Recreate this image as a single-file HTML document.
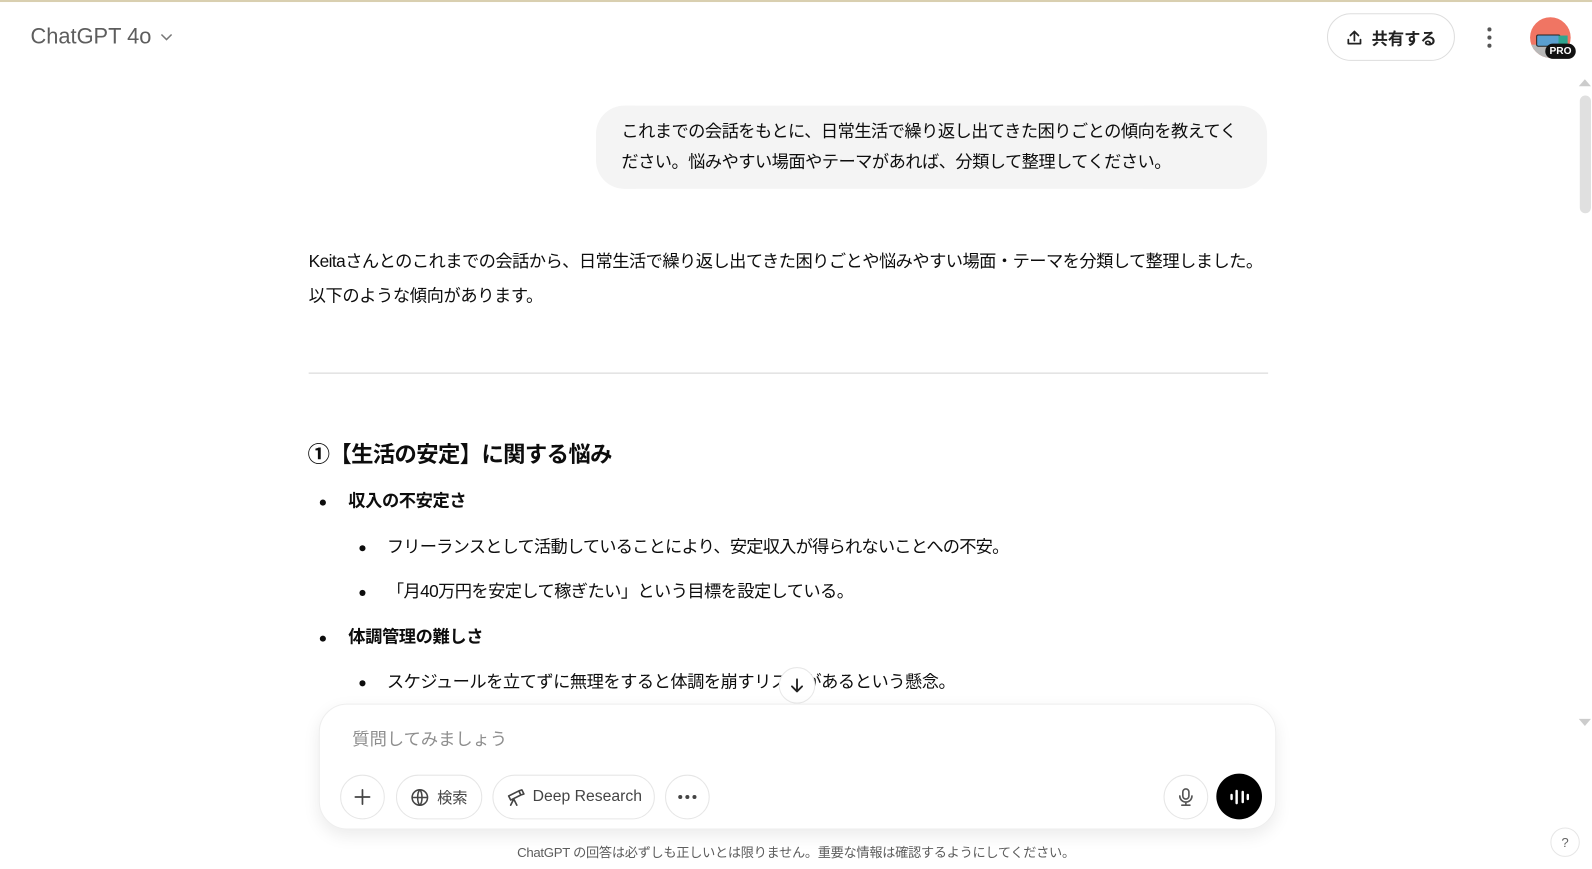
<!DOCTYPE html>
<html><head><meta charset="utf-8"><style>
*{margin:0;padding:0;box-sizing:border-box}
html,body{width:1592px;height:869px;overflow:hidden;background:#fff}
body{font-family:"Liberation Sans","Noto Sans CJK JP",sans-serif;color:#0d0d0d;position:relative}
#w{position:absolute;left:0;top:0;width:1568px;height:856px;transform:scale(1.0153);transform-origin:0 0}
.a{position:absolute;white-space:nowrap}
.topline{position:absolute;left:0;top:0;width:1592px;height:2px;background:#d9cfb0}
.t{font-size:17px;line-height:20px;letter-spacing:-0.4px}
.btn{position:absolute;border:1px solid #e6e6e6;border-radius:22px;background:#fff;display:flex;align-items:center;justify-content:center;font-size:15px;color:#444}
.dot{position:absolute;width:6px;height:6px;border-radius:50%;background:#0d0d0d}
</style></head><body>
<div id="w">
<div class="topline"></div>
<div class="a" style="left:30px;top:24px;font-size:21.5px;color:#5d5d5d">ChatGPT 4o</div>
<svg class="a" style="left:157px;top:31px" width="14" height="12" viewBox="0 0 14 12"><path d="M2 3l5 5 5-5" fill="none" stroke="#777" stroke-width="1.5"/></svg>

<div class="a" style="left:1307px;top:13px;width:126px;height:47px;border:1px solid #ddd;border-radius:24px;display:flex;align-items:center;justify-content:center;font-size:16px;font-weight:bold;color:#222">
<svg width="18" height="18" viewBox="0 0 18 18" style="margin-right:8px"><path d="M9 12V3M5 7l4-4 4 4M3 11v4h12v-4" fill="none" stroke="#222" stroke-width="1.7" stroke-linecap="round" stroke-linejoin="round"/></svg>共有する</div>
<div class="a" style="left:1465px;top:27px;width:4px;height:4px;border-radius:50%;background:#555"></div>
<div class="a" style="left:1465px;top:35px;width:4px;height:4px;border-radius:50%;background:#555"></div>
<div class="a" style="left:1465px;top:43px;width:4px;height:4px;border-radius:50%;background:#555"></div>
<div class="a" style="left:1507px;top:17px;width:40px;height:40px;border-radius:50%;background:#f07563;overflow:hidden">
<div style="position:absolute;left:0;top:27px;width:40px;height:13px;background:#b8b8b8"></div>
<div style="position:absolute;left:6px;top:17px;width:24px;height:12px;background:#5a9fd0;border:1px solid #222;border-radius:2px"></div>
<div style="position:absolute;left:28px;top:18px;width:9px;height:10px;background:#2fa58f"></div>
</div>
<div class="a" style="left:1522px;top:43px;width:30px;height:15px;border-radius:8px;background:#111;color:#fff;font-size:10px;font-weight:bold;text-align:center;line-height:15px">PRO</div>

<div class="a" style="left:1555px;top:78px;width:0;height:0;border-left:6px solid transparent;border-right:6px solid transparent;border-bottom:7px solid #ccc"></div>
<div class="a" style="left:1556px;top:94px;width:11px;height:116px;border-radius:6px;background:#e0e0e0"></div>
<div class="a" style="left:1555px;top:708px;width:0;height:0;border-left:6px solid transparent;border-right:6px solid transparent;border-top:7px solid #ccc"></div>

<div class="a" style="left:587px;top:104px;width:661px;height:82px;background:#f4f4f4;border-radius:28px"></div>
<div class="a t" style="left:612px;top:120px;letter-spacing:-0.55px">これまでの会話をもとに、日常生活で繰り返し出てきた困りごとの傾向を教えてく</div>
<div class="a t" style="left:612px;top:150px;letter-spacing:-0.55px">ださい。悩みやすい場面やテーマがあれば、分類して整理してください。</div>

<div class="a t" style="left:304px;top:248px;letter-spacing:-0.55px">Keitaさんとのこれまでの会話から、日常生活で繰り返し出てきた困りごとや悩みやすい場面・テーマを分類して整理しました。</div>
<div class="a t" style="left:304px;top:282px">以下のような傾向があります。</div>
<div class="a" style="left:304px;top:367px;width:945px;height:1px;background:#d4d4d4"></div>

<div class="a" style="left:303px;top:434px;font-size:22px;font-weight:bold;line-height:28px;letter-spacing:-0.6px">①【生活の安定】に関する悩み</div>
<div class="dot" style="left:315px;top:492px"></div>
<div class="a t" style="left:343px;top:484px;font-weight:bold">収入の不安定さ</div>
<div class="dot" style="left:354px;top:537px"></div>
<div class="a t" style="left:381px;top:529px;letter-spacing:-0.8px">フリーランスとして活動していることにより、安定収入が得られないことへの不安。</div>
<div class="dot" style="left:354px;top:581px"></div>
<div class="a t" style="left:381px;top:573px;letter-spacing:-0.6px">「月40万円を安定して稼ぎたい」という目標を設定している。</div>
<div class="dot" style="left:315px;top:626px"></div>
<div class="a t" style="left:343px;top:618px;font-weight:bold">体調管理の難しさ</div>
<div class="dot" style="left:354px;top:670px"></div>
<div class="a t" style="left:381px;top:662px;letter-spacing:-0.5px">スケジュールを立てずに無理をすると体調を崩すリスクがあるという懸念。</div>

<div class="a" style="left:767px;top:657px;width:36px;height:36px;border-radius:50%;background:#fff;border:1px solid #e8e8e8;display:flex;align-items:center;justify-content:center">
<svg width="18" height="18" viewBox="0 0 18 18"><path d="M9 3v12M4 10l5 5 5-5" fill="none" stroke="#222" stroke-width="1.8" stroke-linecap="round" stroke-linejoin="round"/></svg></div>

<div class="a" style="left:314px;top:693px;width:943px;height:124px;border-radius:28px;background:#fff;border:1px solid #eee;box-shadow:0 6px 16px rgba(0,0,0,0.08)"></div>
<div class="a" style="left:347px;top:714px;font-size:17px;color:#8e8e8e">質問してみましょう</div>
<div class="btn" style="left:335px;top:763px;width:44px;height:44px"><svg width="20" height="20" viewBox="0 0 20 20"><path d="M10 3v14M3 10h14" stroke="#444" stroke-width="1.7" stroke-linecap="round"/></svg></div>
<div class="btn" style="left:390px;top:763px;width:85px;height:44px"><svg width="19" height="19" viewBox="0 0 20 20" style="margin-right:7px"><circle cx="10" cy="10" r="8" fill="none" stroke="#444" stroke-width="1.6"/><path d="M2 10h16M10 2c-3 3-3 13 0 16M10 2c3 3 3 13 0 16" fill="none" stroke="#444" stroke-width="1.6"/></svg>検索</div>
<div class="btn" style="left:485px;top:763px;width:160px;height:44px;font-size:15.5px"><svg width="20" height="20" viewBox="0 0 20 20" style="margin-right:7px"><path d="M3 9l10-5 2 4-10 5zM8 12l-3 6M8 12l3 6M13 4l3-1 2 4-3 1" fill="none" stroke="#444" stroke-width="1.6" stroke-linejoin="round" stroke-linecap="round"/></svg>Deep Research</div>
<div class="btn" style="left:655px;top:763px;width:44px;height:44px"><svg width="20" height="6" viewBox="0 0 20 6"><circle cx="3" cy="3" r="2" fill="#444"/><circle cx="10" cy="3" r="2" fill="#444"/><circle cx="17" cy="3" r="2" fill="#444"/></svg></div>
<div class="btn" style="left:1146px;top:763px;width:44px;height:44px"><svg width="18" height="20" viewBox="0 0 18 20"><rect x="6" y="2" width="6" height="10" rx="3" fill="none" stroke="#555" stroke-width="1.6"/><path d="M3 9a6 6 0 0 0 12 0M9 15v3M5 18h8" fill="none" stroke="#555" stroke-width="1.6" stroke-linecap="round"/></svg></div>
<div class="a" style="left:1198px;top:762px;width:45px;height:45px;border-radius:50%;background:#000;display:flex;align-items:center;justify-content:center"><svg width="22" height="20" viewBox="0 0 22 20"><path d="M3 8v4M8 4v12M14 5v10M19 8v4" stroke="#fff" stroke-width="2.4" stroke-linecap="round"/></svg></div>

<div class="a" style="left:0;width:1568px;top:829px;text-align:center;font-size:13px;color:#5d5d5d;letter-spacing:-0.3px">ChatGPT の回答は必ずしも正しいとは限りません。重要な情報は確認するようにしてください。</div>
<div class="a" style="left:1527px;top:815px;width:29px;height:29px;border-radius:50%;border:1px solid #e6e6e6;text-align:center;line-height:27px;font-size:13px;color:#666">?</div>
</div>
</body></html>
